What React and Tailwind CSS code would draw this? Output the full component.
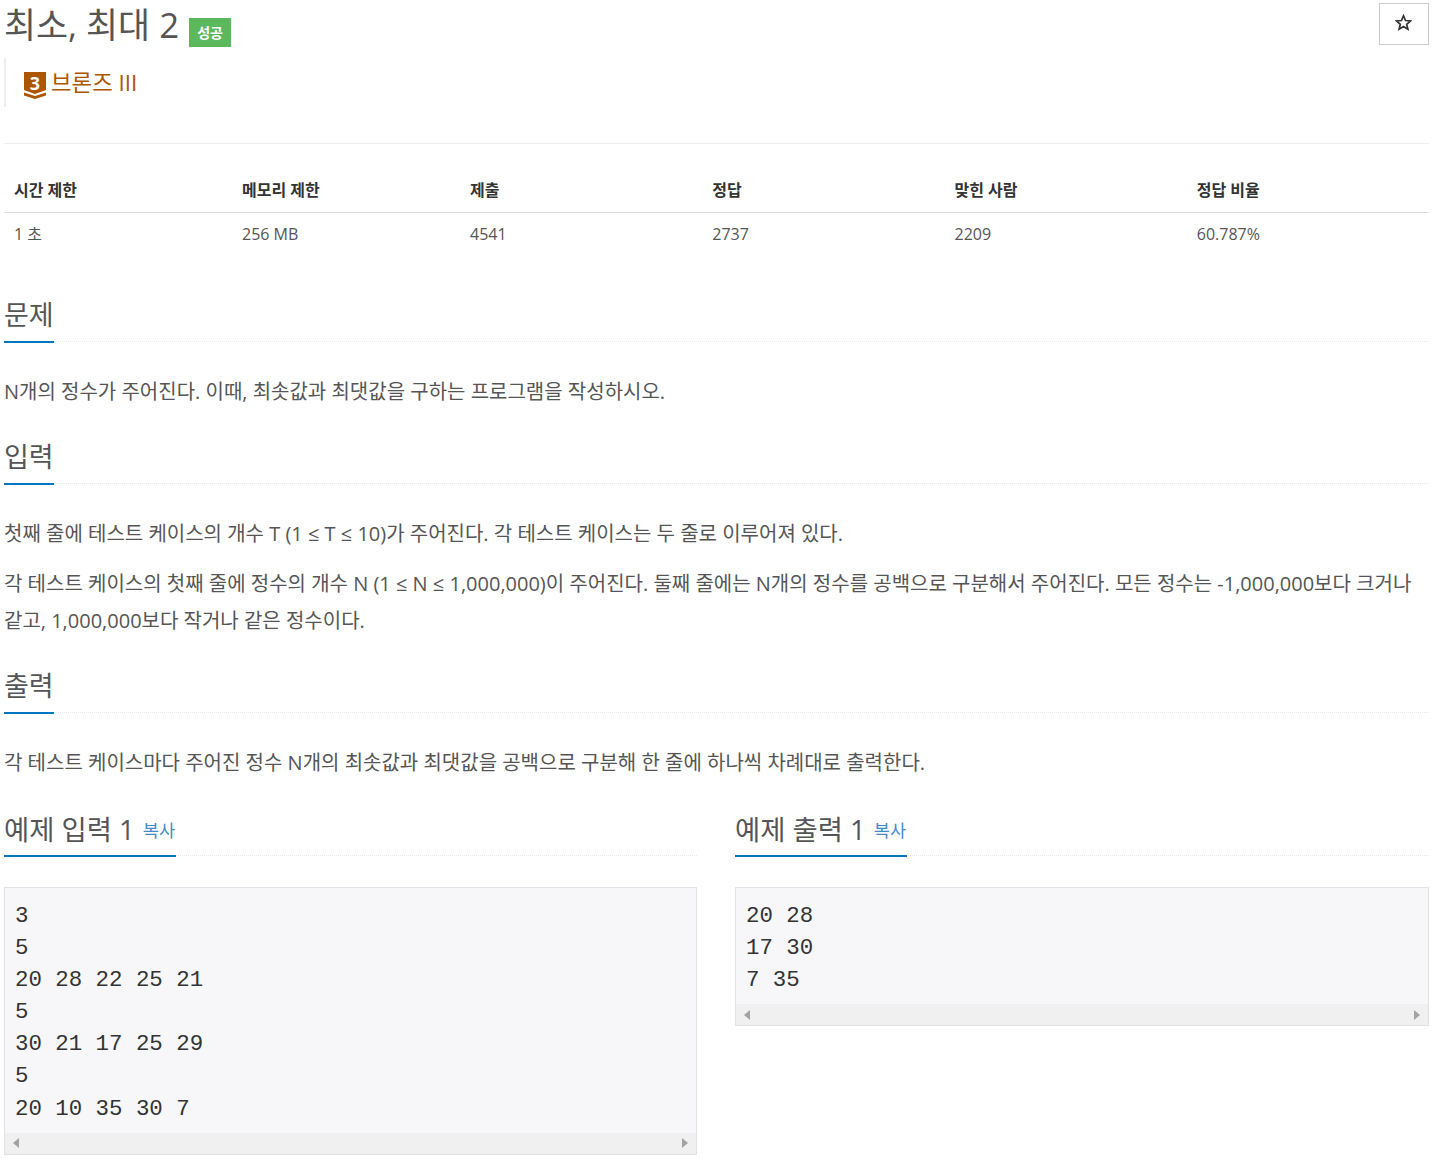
const sans = "font-['Open_Sans','Noto_Sans_CJK_KR',sans-serif]";

function Heading({ children }) {
  return (
    <div className="border-b border-dotted border-[#e8e8e8]">
      <h2 className="-mb-[2px] inline-block border-b-2 border-[#0076c0] pb-[1px] text-[27px] leading-[50px] font-normal text-[#555555]">
        {children}
      </h2>
    </div>
  );
}

function Sample({ title, text }) {
  return (
    <div>
      <div className="border-b border-dotted border-[#e8e8e8]">
        <h2 className="-mb-[2px] inline-block border-b-2 border-[#0076c0] pr-[1px] pb-[4px] text-[27.4px] leading-[42px] font-normal text-[#555555]">
          {title}
          <span className="ml-[8px] align-[3px] text-[17.6px] text-[#428bca]">복사</span>
        </h2>
      </div>
      <div className="mt-[31px] border border-[#e1e1e8] bg-[#f7f7f9]">
        <pre className="px-[10px] pt-[12px] pb-[8px] font-['Liberation_Mono',monospace] text-[22.4px] leading-[32.1px] text-[#333333]">
          {text}
        </pre>
        <div className="flex h-[21px] items-center justify-between bg-[#f0f0f0] px-[8px]">
          <svg width="6" height="10" viewBox="0 0 6 10"><path d="M6 0v10L0 5z" fill="#a3a3a3" /></svg>
          <svg width="6" height="10" viewBox="0 0 6 10"><path d="M0 0v10l6-5z" fill="#a3a3a3" /></svg>
        </div>
      </div>
    </div>
  );
}

export default function App() {
  return (
    <div className={`${sans} h-[1159px] overflow-hidden bg-white px-1 text-[#555555]`}>
      <div className="flex items-start justify-between">
        <div className="flex items-center">
          <h1 className="text-[34.8px] leading-[50px] font-normal">최소, 최대 2</h1>
          <span className="mt-[15px] ml-[10px] flex h-[29px] w-[42px] items-center justify-center bg-[#5cb85c] text-[14px] font-bold text-white">성공</span>
        </div>
        <button className="mt-[3px] flex h-[42px] w-[50px] items-center justify-center border border-[#cccccc] bg-white pr-[2px] pb-[4px]">
          <svg width="17" height="17" viewBox="0 0 24 24" fill="none" stroke="#333333" strokeWidth="2.4">
            <path d="M12 2.500l2.800 6.700 7.200.6-5.500 4.700 1.700 7-6.200-3.800-6.200 3.800 1.700-7L2 9.800l7.200-.6z" />
          </svg>
        </button>
      </div>
      <div className="mt-[8px] flex h-[49px] items-center border-l-[2px] border-[#eeeeee] pl-[18px]">
        <svg width="22" height="27" viewBox="0 0 22 27" className="mt-[6px]">
          <path d="M0 0h22v18l-11 4-11-4z" fill="#ad5600" />
          <path d="M0 20.500l11 3.500 11-3.500v3l-11 3.500-11-3.500z" fill="#ad5600" />
          <text x="11" y="17.500" textAnchor="middle" fontSize="18" fontWeight="700" fill="#fff" fontFamily="Open Sans">3</text>
        </svg>
        <span className="ml-[5px] text-[22.4px] text-[#ad5600]">브론즈 III</span>
      </div>
      <div className="mt-[36px] border-t border-[#eeeeee]" />
      <table className="mt-[26px] w-full table-fixed text-[16px]">
        <thead>
          <tr className="border-b border-[#dddddd] text-left text-[#333333]">
            {[["시간 제한", "w-[16%]"], ["메모리 제한", "w-[16%]"], ["제출", "w-[17%]"], ["정답", "w-[17%]"], ["맞힌 사람", "w-[17%]"], ["정답 비율", "w-[17%]"]].map(([t, w]) => (
              <th key={t} className={`${w} h-[42px] px-[10px] pb-[2px] font-bold`}>{t}</th>
            ))}
          </tr>
        </thead>
        <tbody>
          <tr>
            {["1 초", "256 MB", "4541", "2737", "2209", "60.787%"].map((t) => (
              <td key={t} className="h-[43px] px-[10px]">{t}</td>
            ))}
          </tr>
        </tbody>
      </table>
      <section className="mt-[35px]">
        <Heading>문제</Heading>
        <p className="mt-[31px] text-[20px] leading-[37px]">N개의 정수가 주어진다. 이때, 최솟값과 최댓값을 구하는 프로그램을 작성하시오.</p>
      </section>
      <section className="mt-[22px]">
        <Heading>입력</Heading>
        <p className="mt-[31px] text-[20px] leading-[37px]">첫째 줄에 테스트 케이스의 개수 T (1 ≤ T ≤ 10)가 주어진다. 각 테스트 케이스는 두 줄로 이루어져 있다.</p>
        <p className="mt-[13px] text-[20px] leading-[37px]">각 테스트 케이스의 첫째 줄에 정수의 개수 N (1 ≤ N ≤ 1,000,000)이 주어진다. 둘째 줄에는 N개의 정수를 공백으로 구분해서 주어진다. 모든 정수는 -1,000,000보다 크거나 같고, 1,000,000보다 작거나 같은 정수이다.</p>
      </section>
      <section className="mt-[22px]">
        <Heading>출력</Heading>
        <p className="mt-[31px] text-[20px] leading-[37px]">각 테스트 케이스마다 주어진 정수 N개의 최솟값과 최댓값을 공백으로 구분해 한 줄에 하나씩 차례대로 출력한다.</p>
      </section>
      <div className="mt-[28px] grid grid-cols-[693px_694px] items-start gap-x-[38px]">
        <Sample title="예제 입력 1" text={"3\n5\n20 28 22 25 21\n5\n30 21 17 25 29\n5\n20 10 35 30 7"} />
        <Sample title="예제 출력 1" text={"20 28\n17 30\n7 35"} />
      </div>
    </div>
  );
}
